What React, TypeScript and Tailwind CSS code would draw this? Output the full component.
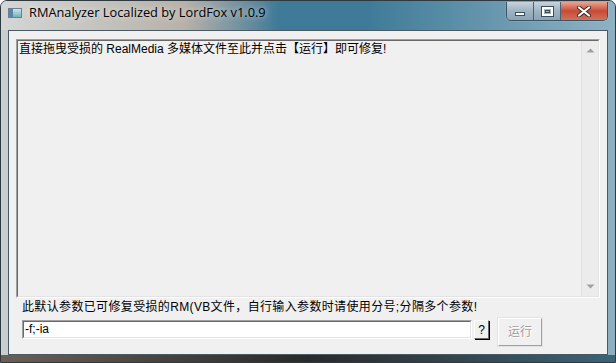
import React from "react";

const cjk = { fontFamily: '"Liberation Sans", "Noto Sans CJK SC", sans-serif' };

function CaptionButtons() {
  return (
    <div className="flex h-[19px] self-start mt-[1px] mr-[7px] rounded-b-[5px] border border-[#3a5465] border-t-0 overflow-hidden shadow-[0_0_1px_rgba(255,255,255,0.8)]">
      <div className="w-[27px] flex items-center justify-center bg-gradient-to-b from-[#c6d4dd] via-[#9fb3c1] to-[#8ba4b4] border-r border-[#4b6474]">
        <div className="w-[10px] h-[4px] mt-[5px] bg-white border border-[#38505e]" />
      </div>
      <div className="w-[27px] flex items-center justify-center bg-gradient-to-b from-[#c6d4dd] via-[#9fb3c1] to-[#8ba4b4] border-r border-[#4b6474]">
        <div className="w-[11px] h-[9px] border-[2px] border-white outline outline-1 outline-[#38505e] flex items-center justify-center">
          <div className="w-[5px] h-[3px] border border-[#38505e]" />
        </div>
      </div>
      <div className="w-[46px] flex items-center justify-center bg-gradient-to-b from-[#e8a493] via-[#c74a35] to-[#d1725a]">
        <svg width="14" height="11" viewBox="0 0 14 11">
          <path d="M2 1.5 L12 9.5 M12 1.5 L2 9.5" stroke="#3b2a26" strokeWidth="4" strokeLinecap="round" />
          <path d="M2 1.5 L12 9.5 M12 1.5 L2 9.5" stroke="#ffffff" strokeWidth="2.2" strokeLinecap="round" />
        </svg>
      </div>
    </div>
  );
}

export default function App() {
  return (
    <div
      className="w-[616px] h-[363px] flex flex-col overflow-hidden rounded-t-[7px] border border-[#2f3a40] bg-gradient-to-r from-[#c9cfd1] via-[#5b7d90] to-[#8eafbf]"
      style={cjk}
    >
      {/* title bar */}
      <div className="h-[29px] flex items-center bg-gradient-to-r from-[#d4d7d6] via-[#b7b1a9] via-30% to-[#3f7b98] to-45% relative">
        <div className="absolute inset-0 bg-gradient-to-r from-transparent via-transparent via-60% to-[#8fb2c3]" />
        <div className="relative flex items-center flex-1 pl-[7px] pb-[5px]">
          <div className="w-[14px] h-[10px] flex border border-[#6b7f8c] bg-white">
            <div className="w-[4px] bg-[#5a86a8]" />
            <div className="flex-1 bg-gradient-to-b from-[#cfe4ec] to-[#6fb2b8]" />
          </div>
          <span
            className="ml-[7px] text-[12.8px] text-black [text-shadow:0_0_6px_rgba(255,255,255,0.9)]"
            style={{ fontFamily: '"Open Sans", "Noto Sans", sans-serif' }}
          >
            RMAnalyzer Localized by LordFox v1.0.9
          </span>
        </div>
        <div className="relative self-stretch flex">
          <CaptionButtons />
        </div>
      </div>

      {/* client area */}
      <div className="flex-1 mx-[7px] border border-[#4a5a64] bg-[#f0f0f0] flex flex-col px-[7px] pt-[8px]">
        <div className="h-[259px] flex border border-t-[#a0a0a0] border-l-[#a0a0a0] border-r-white border-b-white">
          <div className="flex-1 flex border border-t-[#696969] border-l-[#696969] border-r-[#e3e3e3] border-b-[#e3e3e3] bg-[#f0f0f0]">
            <div className="flex-1 text-[12px] leading-[15px] text-black pl-[1px] pt-[1px]">
              直接拖曳受损的 RealMedia 多媒体文件至此并点击【运行】即可修复!
            </div>
            <div className="w-[17px] flex flex-col justify-between items-center bg-[#ececec] border-l border-[#e0e0e0] py-[7px]">
              <svg width="9" height="5" viewBox="0 0 9 5">
                <path d="M0.5 4.5 L4.5 0.5 L8.5 4.5 Z" fill="#a0a0a0" />
              </svg>
              <svg width="9" height="5" viewBox="0 0 9 5">
                <path d="M0.5 0.5 L4.5 4.5 L8.5 0.5 Z" fill="#a0a0a0" />
              </svg>
            </div>
          </div>
        </div>

        <div className="mt-[2px] pl-[6px] text-[12px] leading-[15px] text-black whitespace-nowrap tracking-[0.35px]">
          此默认参数已可修复受损的RM(VB文件，自行输入参数时请使用分号;分隔多个参数!
        </div>

        <div className="flex items-start pl-[6px] mt-[3px]">
          <div className="w-[450px] h-[19px] mt-[2px] border border-t-[#a0a0a0] border-l-[#a0a0a0] border-r-white border-b-white">
            <div className="h-full border border-t-[#696969] border-l-[#696969] border-r-[#e3e3e3] border-b-[#e3e3e3] bg-white text-[12px] leading-[15px] pl-[1px]">
              -f;-ia
            </div>
          </div>
          <div className="ml-[2px] mt-[2px] w-[15px] h-[19px] flex items-center justify-center bg-[#f0f0f0] border border-t-white border-l-white border-r-[#696969] border-b-[#696969] shadow-[1px_1px_0_#000] text-[12px] leading-none">
            ?
          </div>
          <div className="ml-[9px] w-[44px] h-[28px] flex items-center justify-center bg-[#f0f0f0] border border-t-white border-l-white border-r-[#a0a0a0] border-b-[#a0a0a0] outline outline-1 outline-[#e3e3e3] text-[12px] text-[#a0a0a0] [text-shadow:1px_1px_0_#ffffff]">
            运行
          </div>
        </div>
      </div>

      {/* bottom frame */}
      <div className="h-[7px] bg-gradient-to-r from-[#6b5f56] via-[#2a2a2a] to-[#3a6478]" />
    </div>
  );
}
